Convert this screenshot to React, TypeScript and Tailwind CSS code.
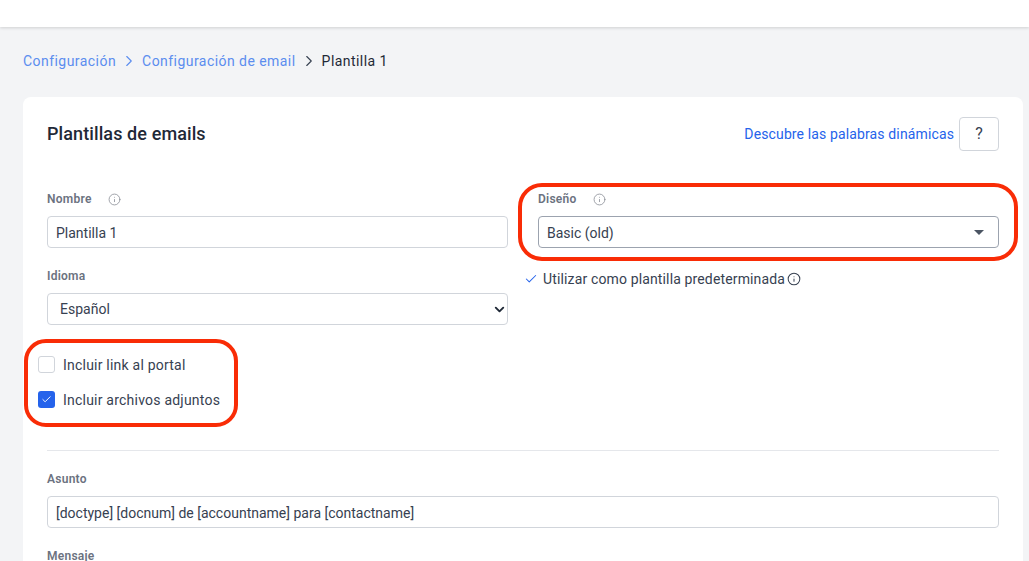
import { Check, ChevronDown, ChevronRight, Info } from "lucide-react";

function FieldLabel({ children, info }: { children: string; info?: boolean }) {
  return (
    <div className="flex h-[14px] items-center text-[12px] font-semibold leading-[14px] tracking-[0.25px] text-[#6b7280]">
      <span>{children}</span>
      {info && <Info className="ml-[16px] h-[13px] w-[13px] text-[#8b8f98]" strokeWidth={1.5} />}
    </div>
  );
}

function TextField({ value }: { value: string }) {
  return (
    <input
      readOnly
      value={value}
      className="mt-[10px] h-8 w-full rounded border border-[#d1d5db] bg-white px-2 pt-px text-[14px] text-[#374151] outline-none"
    />
  );
}

export default function App() {
  return (
    <div className="relative h-[561px] w-[1029px] overflow-hidden bg-[#f3f4f6] font-['Roboto',sans-serif]">
      {/* Top bar */}
      <div className="h-[27px] bg-white shadow-[0_1px_3px_rgba(0,0,0,0.15)]" />

      {/* Breadcrumb */}
      <nav className="mt-[24px] flex h-[20px] items-center pl-[23px] text-[14px] tracking-[0.45px]">
        <span className="text-[#5b8def]">Configuración</span>
        <ChevronRight className="mx-[4px] h-[18px] w-[18px] text-[#5b8def]" strokeWidth={1.5} />
        <span className="text-[#5b8def]">Configuración de email</span>
        <ChevronRight className="mx-[4px] h-[18px] w-[18px] text-[#374151]" strokeWidth={1.5} />
        <span className="text-[#1f2937]">Plantilla 1</span>
      </nav>

      {/* Card */}
      <div className="ml-[23px] mt-[26px] w-[1000px] rounded-lg bg-white px-6 pt-5 pb-6">
        <div className="flex h-[34px] items-center justify-between">
          <h1 className="pb-[2px] text-[18px] font-medium tracking-[0.1px] text-[#1f2937]">Plantillas de emails</h1>
          <div className="flex items-center gap-[5px]">
            <a className="text-[14px] tracking-[0.13px] text-[#2563eb]">Descubre las palabras dinámicas</a>
            <button className="flex h-[34px] w-10 items-center justify-center rounded border border-[#d1d5db] bg-white text-[16px] text-[#374151]">
              ?
            </button>
          </div>
        </div>

        <div className="mt-[41px] grid grid-cols-2 gap-x-[30px]">
          {/* Left column */}
          <div>
            <FieldLabel info>Nombre</FieldLabel>
            <TextField value="Plantilla 1" />
            <div className="mt-[21px]">
              <FieldLabel>Idioma</FieldLabel>
            </div>
            <div className="relative mt-[10px]">
              <select className="h-8 w-full appearance-none rounded border border-[#d1d5db] bg-white pl-3 text-[14px] text-[#374151] outline-none">
                <option>Español</option>
              </select>
              <ChevronDown
                className="pointer-events-none absolute right-[1px] top-[9px] h-[15px] w-[15px] text-[#1f2937]"
                strokeWidth={3}
              />
            </div>
          </div>

          {/* Right column */}
          <div>
            <FieldLabel info>Diseño</FieldLabel>
            <div className="mt-[10px] flex h-8 items-center justify-between rounded border border-[#9ca3af] bg-white pl-2 pr-[14px] text-[14px] text-[#374151]">
              <span className="pt-[2px]">Basic (old)</span>
              <span className="h-0 w-0 border-x-[5px] border-t-[5px] border-x-transparent border-t-[#4b5563]" />
            </div>
            <div className="-ml-[14px] mt-[22px] flex h-[18px] items-center text-[14px] tracking-[0.14px] text-[#374151]">
              <Check className="mr-[5px] h-[14px] w-[14px] text-[#2563eb]" strokeWidth={1.75} />
              <span>Utilizar como plantilla predeterminada</span>
              <Info className="ml-[2px] h-[14px] w-[14px] text-[#374151]" strokeWidth={1.75} />
            </div>
          </div>
        </div>

        {/* Checkboxes */}
        <div className="ml-[-9px] mt-[31px] flex flex-col gap-[18px]">
          <label className="flex h-[17px] items-center gap-2 text-[14px] tracking-[0.22px] text-[#374151]">
            <span className="h-[17px] w-[17px] rounded-[3px] border border-[#d1d5db] bg-white" />
            <span className="pt-[2px]">Incluir link al portal</span>
          </label>
          <label className="flex h-[17px] items-center gap-2 text-[14px] tracking-[0.22px] text-[#374151]">
            <span className="flex h-[17px] w-[17px] items-center justify-center rounded-[3px] bg-[#2563eb]">
              <Check className="h-[11px] w-[11px] text-white" strokeWidth={2} />
            </span>
            <span className="pt-[2px]">Incluir archivos adjuntos</span>
          </label>
        </div>

        <div className="mt-[42px] h-px bg-[#e5e7eb]" />

        <div className="mt-[21px]">
          <FieldLabel>Asunto</FieldLabel>
          <TextField value="[doctype] [docnum] de [accountname] para [contactname]" />
        </div>
        <div className="mt-[21px]">
          <FieldLabel>Mensaje</FieldLabel>
        </div>
      </div>

      {/* Highlight annotations */}
      <div className="absolute left-[518px] top-[183px] h-[78px] w-[500px] rounded-[24px] border-4 border-[#f92c06]" />
      <div className="absolute left-[24px] top-[339px] h-[88px] w-[214px] rounded-[22px] border-4 border-[#f92c06]" />
    </div>
  );
}
